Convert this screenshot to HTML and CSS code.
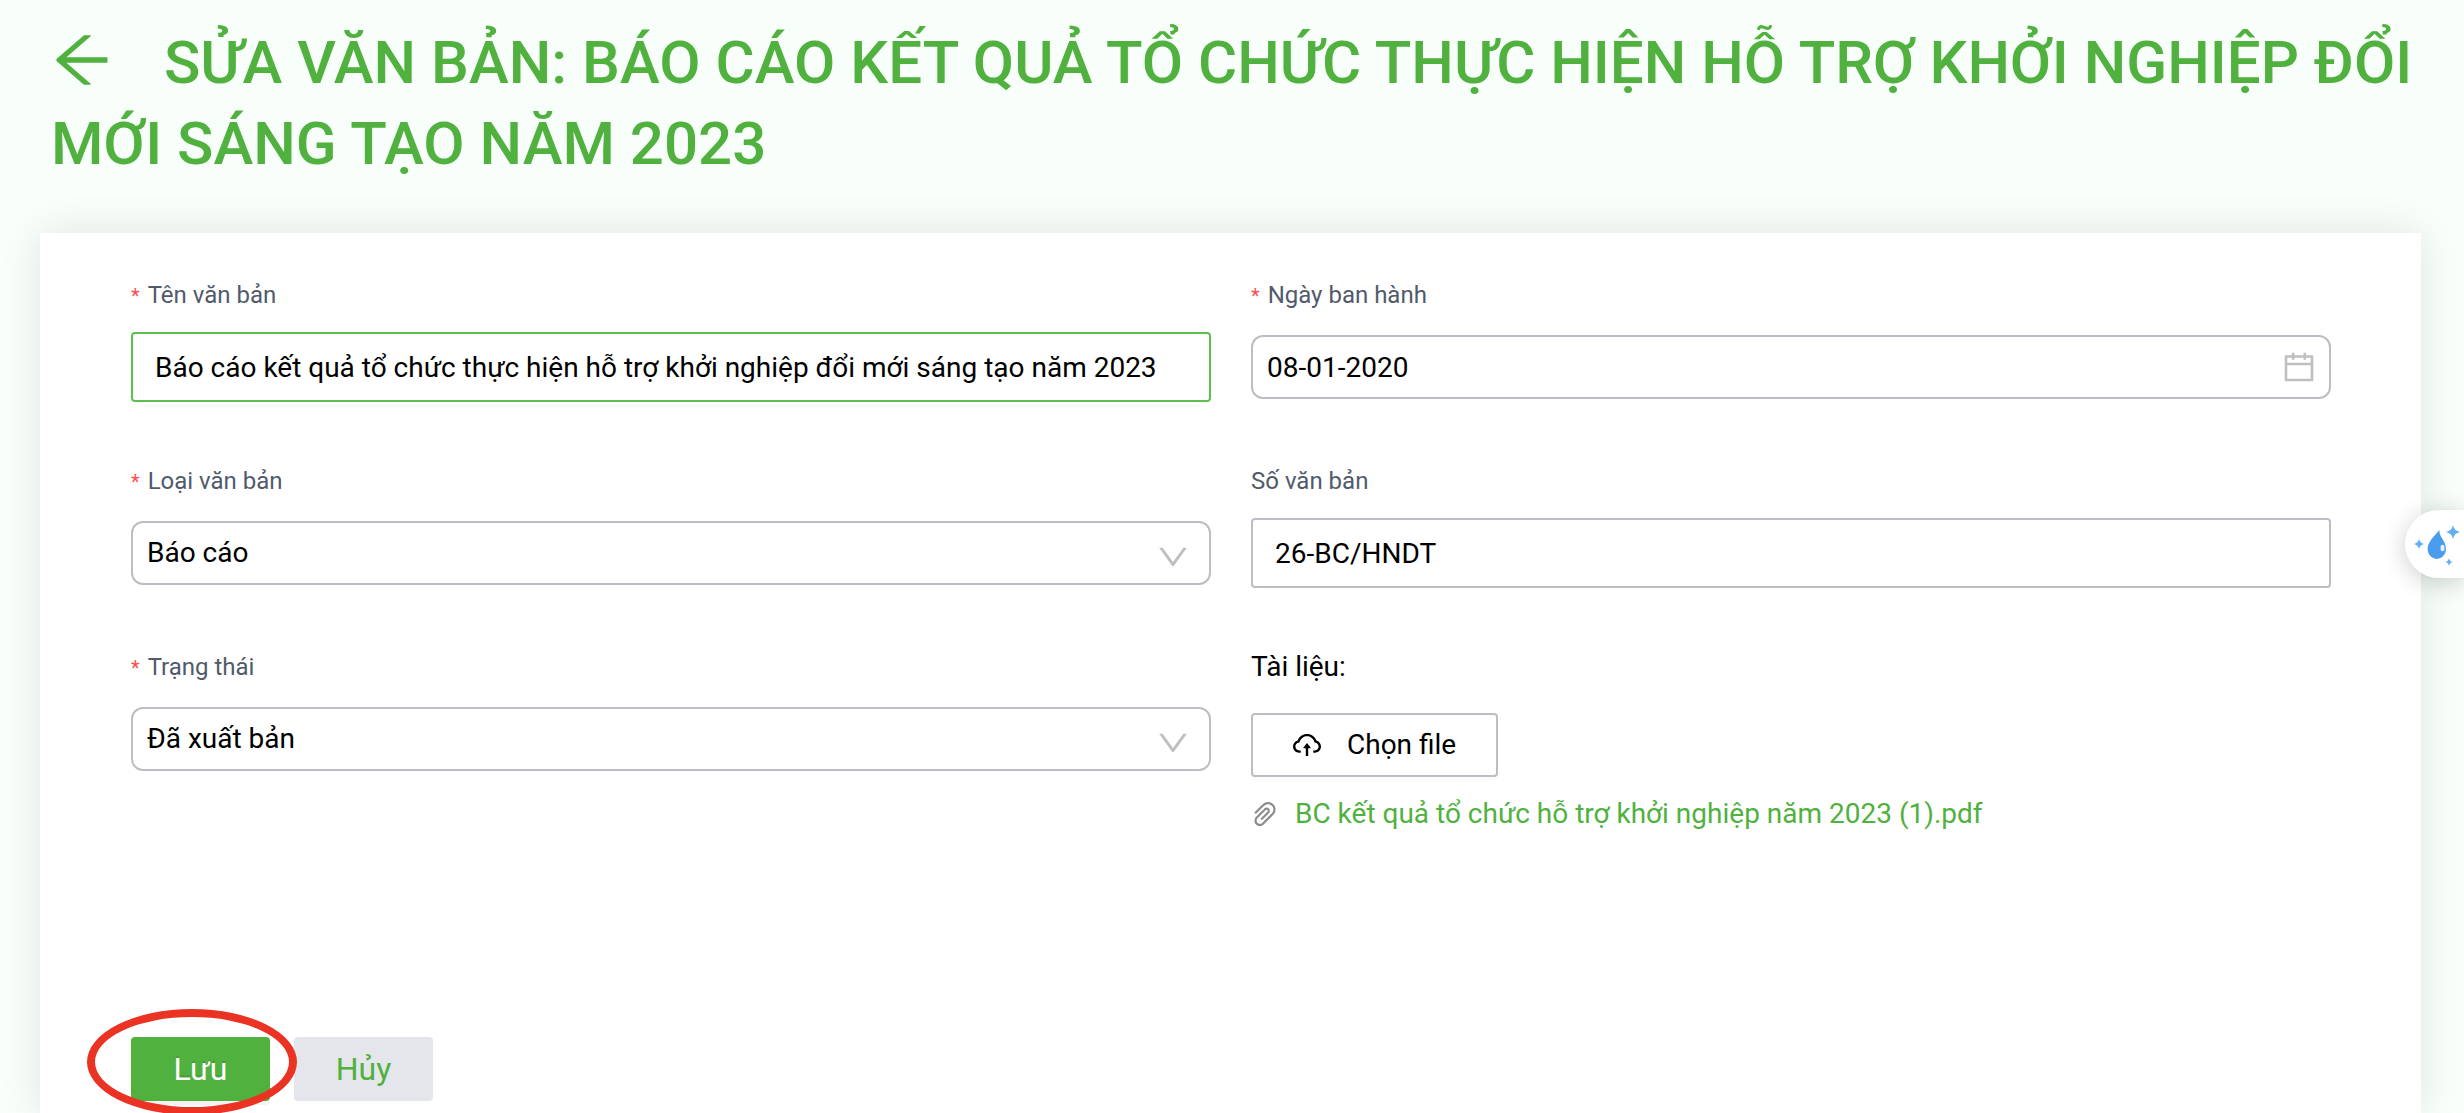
FILE: index.html
```html
<!DOCTYPE html>
<html lang="vi">
<head>
<meta charset="utf-8">
<meta name="viewport" content="width=device-width, initial-scale=1">
<title>Sửa văn bản</title>
<link rel="stylesheet" href="styles.css">
</head>
<body>
<div class="page">
  <h1 class="title"><a class="back" href="#" aria-label="Quay lại"><svg viewBox="64 64 896 896" aria-hidden="true"><path d="M872 474H286.9l350.2-304c5.6-4.9 2.2-14-5.2-14h-88.5c-3.9 0-7.6 1.4-10.5 3.9L155 487.8a31.96 31.96 0 000 48.3L535.1 866c1.5 1.3 3.3 2 5.2 2h91.5c7.4 0 10.8-9.2 5.2-14L286.9 550H872c4.4 0 8-3.6 8-8v-60c0-4.4-3.6-8-8-8z"/></svg></a>SỬA VĂN BẢN: BÁO CÁO KẾT QUẢ TỔ CHỨC THỰC HIỆN HỖ TRỢ KHỞI NGHIỆP ĐỔI MỚI SÁNG TẠO NĂM 2023</h1>

  <form class="card">
    <div class="fields">
      <div class="field">
        <label class="label required" for="name">Tên văn bản</label>
        <div class="control"><input class="box input active" id="name" type="text" value="Báo cáo kết quả tổ chức thực hiện hỗ trợ khởi nghiệp đổi mới sáng tạo năm 2023"></div>
      </div>
      <div class="field">
        <label class="label required" for="date">Ngày ban hành</label>
        <div class="control">
          <input class="box rounded" id="date" type="text" value="08-01-2020">
          <svg class="icon" viewBox="64 64 896 896" aria-hidden="true"><path d="M880 184H712v-64c0-4.4-3.6-8-8-8h-56c-4.4 0-8 3.6-8 8v64H384v-64c0-4.4-3.6-8-8-8h-56c-4.4 0-8 3.6-8 8v64H144c-17.7 0-32 14.3-32 32v664c0 17.7 14.3 32 32 32h736c17.7 0 32-14.3 32-32V216c0-17.7-14.3-32-32-32zm-40 656H184V460h656v380zM184 392V256h128v48c0 4.4 3.6 8 8 8h56c4.4 0 8-3.6 8-8v-48h256v48c0 4.4 3.6 8 8 8h56c4.4 0 8-3.6 8-8v-48h128v136H184z"/></svg>
        </div>
      </div>
      <div class="field">
        <label class="label required" for="type">Loại văn bản</label>
        <div class="control">
          <select class="box rounded" id="type"><option>Báo cáo</option></select>
          <svg class="icon chevron" viewBox="64 64 896 896" aria-hidden="true"><path d="M884 256h-75c-5.1 0-9.9 2.5-12.9 6.6L512 654.2 227.9 262.6c-3-4.1-7.8-6.6-12.9-6.6h-75c-6.5 0-10.3 7.4-6.5 12.7l352.6 486.1c12.8 17.6 39 17.6 51.7 0l352.6-486.1c3.9-5.3.1-12.7-6.4-12.7z"/></svg>
        </div>
      </div>
      <div class="field">
        <label class="label" for="number">Số văn bản</label>
        <div class="control"><input class="box input" id="number" type="text" value="26-BC/HNDT"></div>
      </div>
      <div class="field">
        <label class="label required" for="status">Trạng thái</label>
        <div class="control">
          <select class="box rounded" id="status"><option>Đã xuất bản</option></select>
          <svg class="icon chevron" viewBox="64 64 896 896" aria-hidden="true"><path d="M884 256h-75c-5.1 0-9.9 2.5-12.9 6.6L512 654.2 227.9 262.6c-3-4.1-7.8-6.6-12.9-6.6h-75c-6.5 0-10.3 7.4-6.5 12.7l352.6 486.1c12.8 17.6 39 17.6 51.7 0l352.6-486.1c3.9-5.3.1-12.7-6.4-12.7z"/></svg>
        </div>
      </div>
      <div class="field">
        <span class="files-label" id="files">Tài liệu:</span>
        <button class="upload" type="button" aria-describedby="files">
          <svg viewBox="64 64 896 896" aria-hidden="true"><path d="M518.3 459a8 8 0 00-12.6 0l-112 141.7a7.98 7.98 0 006.3 12.9h73.9V856c0 4.4 3.6 8 8 8h60c4.4 0 8-3.6 8-8V613.7H624c6.7 0 10.4-7.7 6.3-12.9L518.3 459z"/><path d="M811.4 366.7C765.6 245.9 648.9 160 512.2 160S258.8 245.8 213 366.6C127.3 389.1 64 467.2 64 560c0 110.5 89.5 200 199.9 200H304c4.4 0 8-3.6 8-8v-60c0-4.4-3.6-8-8-8h-40.1c-33.7 0-65.4-13.4-89-37.7-23.5-24.2-36-56.8-34.9-90.6.9-26.4 9.9-51.2 26.2-72.1 16.7-21.3 40.1-36.8 66.1-43.7l37.9-9.9 13.9-36.6c8.6-22.8 20.6-44.1 35.7-63.4a245.6 245.6 0 0152.4-49.9c41.1-28.9 89.5-44.2 140-44.2s98.9 15.3 140 44.2c19.9 14 37.5 30.8 52.4 49.9 15.1 19.3 27.1 40.7 35.7 63.4l13.8 36.5 37.8 10C846.1 454.5 884 503.8 884 560c0 33.1-12.9 64.3-36.3 87.7a123.07 123.07 0 01-87.6 36.3H720c-4.4 0-8 3.6-8 8v60c0 4.4 3.6 8 8 8h40.1C870.5 760 960 670.5 960 560c0-92.7-63.1-170.7-148.6-193.3z"/></svg>
          Chọn file
        </button>
        <div class="file">
          <svg viewBox="64 64 896 896" aria-hidden="true"><path d="M779.3 196.6c-94.2-94.2-247.6-94.2-341.7 0l-261 260.8c-1.7 1.7-2.6 4-2.6 6.4s.9 4.7 2.6 6.4l36.9 36.9a9 9 0 0012.7 0l261-260.8c32.4-32.4 75.5-50.2 121.3-50.2s88.9 17.8 121.2 50.2c32.4 32.4 50.2 75.5 50.2 121.2 0 45.8-17.8 88.8-50.2 121.2l-266 265.9-43.1 43.1c-40.3 40.3-105.8 40.3-146.1 0-19.5-19.5-30.2-45.4-30.2-73s10.7-53.5 30.2-73l263.9-263.8c6.7-6.6 15.5-10.3 24.9-10.3h.1c9.4 0 18.1 3.7 24.7 10.3 6.7 6.7 10.3 15.5 10.3 24.9 0 9.3-3.7 18.1-10.3 24.7L372.4 653c-1.7 1.7-2.6 4-2.6 6.4s.9 4.7 2.6 6.4l36.9 36.9a9 9 0 0012.7 0l215.6-215.6c19.9-19.9 30.8-46.3 30.8-74.4s-11-54.6-30.8-74.4c-41.1-41.1-107.9-41-149 0L463 364 224.8 602.1A172.22 172.22 0 00174 724.8c0 46.3 18.1 89.8 50.8 122.5 33.9 33.8 78.3 50.7 122.7 50.7 44.4 0 88.8-16.9 122.6-50.7l309.2-309C824.8 492.7 850 432 850 367.5c.1-64.6-25.1-125.3-70.7-170.9z"/></svg>
          <a href="#">BC kết quả tổ chức hỗ trợ khởi nghiệp năm 2023 (1).pdf</a>
        </div>
      </div>
    </div>
    <div class="actions">
      <span class="marked">
        <button class="btn save" type="submit">Lưu</button>
        <span class="ring" aria-hidden="true"></span>
      </span>
      <button class="btn cancel" type="button">Hủy</button>
    </div>
  </form>
</div>

<button class="assistant" type="button" aria-label="Trợ lý">
  <svg viewBox="0 0 59 68" aria-hidden="true">
    <path fill="#4a9dec" d="M34.500 20c-1 6.500 6.500 10.500 6.500 19a9.200 10 0 0 1-18.400 0C22.600 31.500 30 25.500 34.500 20z"/>
    <ellipse cx="37.500" cy="38" rx="2" ry="3.200" fill="#e3f0fb"/>
    <g fill="#62b1f2">
      <path d="M48 15q1.200 5.800 7 7-5.800 1.200-7 7-1.200-5.800-7-7 5.800-1.200 7-7z"/>
      <path d="M14 29q1 4 5 5-4 1-5 5-1-4-5-5 4-1 5-5z"/>
      <path d="M44 48.500q.7 3 3.500 3.500-2.800.7-3.500 3.500-.7-2.800-3.500-3.500 2.800-.5 3.500-3.500z"/>
    </g>
  </svg>
</button>
</body>
</html>
```

FILE: styles.css
```css
:root {
  --green: #50b13f;
  --line: #bdbdc5;
  --muted: #bfbfbf;
}

* {
  box-sizing: border-box;
}

body {
  margin: 0;
  background: #f8fffa;
  color: #000;
  font: 28px/44px Roboto, "Noto Sans", sans-serif;
}

button,
input,
select {
  font: inherit;
  color: inherit;
}

button {
  cursor: pointer;
}

svg {
  fill: currentColor;
}

a {
  color: var(--green);
  text-decoration: none;
}

.page {
  display: flex;
  flex-direction: column;
  min-height: 100vh;
  overflow: clip;
}

.title {
  margin: 0;
  padding: 22px 40px 49px 51px;
  color: var(--green);
  font-size: 60px;
  font-weight: 500;
  line-height: 81px;
}

.back {
  display: inline-block;
  margin-right: 51px;
  line-height: 0;
}

.back svg {
  width: 62px;
  height: 62px;
  vertical-align: -8px;
}

.card {
  flex: 1;
  margin: 0 43px 0 40px;
  padding: 40px 90px 10px 91px;
  background: #fff;
  box-shadow: 0 0 40px rgba(0, 0, 0, 0.1);
}

.fields {
  display: grid;
  grid-template-columns: 1fr 1fr;
  gap: 57px 40px;
}

.field {
  display: flex;
  flex-direction: column;
  min-width: 0;
}

.label {
  color: #515a6b;
  font-size: 24px;
}

.required::before {
  content: "*";
  margin-right: 8px;
  color: #ff4d4f;
  font-size: 20px;
  line-height: 1;
}

.control {
  position: relative;
  display: flex;
  align-items: center;
  height: 70px;
  margin-top: 15px;
}

.box {
  appearance: none;
  width: 100%;
  height: 64px;
  margin: 0;
  padding: 0 14px;
  border: 2px solid var(--line);
  background: #fff;
  outline: none;
}

.input {
  height: 70px;
  padding: 0 22px;
  border-radius: 4px;
}

.active {
  border-color: #5dbf4d;
}

.rounded {
  border-radius: 12px;
}

.icon {
  position: absolute;
  right: 16px;
  width: 32px;
  height: 32px;
  color: var(--muted);
  pointer-events: none;
}

.chevron {
  right: 22px;
  margin-top: 8px;
}

.upload {
  display: flex;
  align-items: center;
  align-self: flex-start;
  gap: 26px;
  height: 64px;
  margin-top: 24px;
  padding: 0 40px;
  border: 2px solid var(--line);
  border-radius: 4px;
  background: #fff;
  box-shadow: 0 4px 0 rgba(0, 0, 0, 0.016);
}

.upload svg,
.file svg {
  width: 28px;
  height: 28px;
}

.file {
  display: flex;
  align-items: center;
  gap: 16px;
  margin-top: 15px;
  color: rgba(0, 0, 0, 0.45);
}

.actions {
  display: flex;
  gap: 24px;
  margin-top: 201px;
}

.marked {
  position: relative;
}

.btn {
  display: block;
  width: 139px;
  height: 64px;
  padding: 0;
  border: 0;
  border-radius: 4px;
  font-size: 32px;
}

.save {
  background: var(--green);
  color: #fff;
  text-shadow: 0 -2px 0 rgba(0, 0, 0, 0.12);
  box-shadow: 0 4px 0 rgba(0, 0, 0, 0.043);
}

.cancel {
  background: #e4e6eb;
  color: var(--green);
}

/* Hand-drawn style highlight around the save button */
.ring {
  position: absolute;
  inset: -28px -27px -14px -44px;
  border: 8px solid #eb3323;
  border-radius: 50%;
  pointer-events: none;
}

.assistant {
  position: fixed;
  top: 510px;
  right: 0;
  width: 59px;
  height: 68px;
  padding: 0;
  border: 0;
  border-radius: 34px 0 0 34px;
  background: #fff;
  box-shadow: 0 4px 24px rgba(0, 0, 0, 0.2);
}

.assistant svg {
  display: block;
}
```
